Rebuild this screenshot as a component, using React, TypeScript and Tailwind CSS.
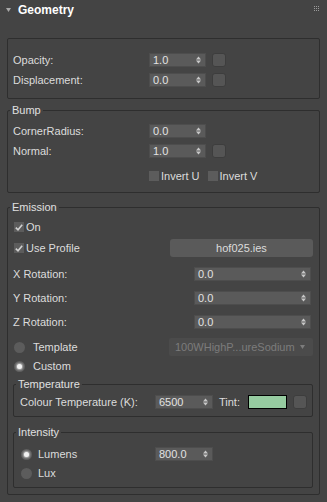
import React from "react";

const Arrows = () => (
  <svg width="5" height="8" viewBox="0 0 5 8" className="shrink-0">
    <path d="M0 3.5 L2.5 0.5 L5 3.5 Z" fill="#c8c8c8" />
    <path d="M0 4.5 L2.5 7.5 L5 4.5 Z" fill="#c8c8c8" />
  </svg>
);

function Spinner({ value, w }: { value: string; w: string }) {
  return (
    <div
      className={`${w} h-[14px] bg-[#5a5a5a] border border-[#4d4d4d] flex items-center justify-between pl-[3px] pr-[4px] text-[#e2e2e2] leading-none`}
    >
      <span>{value}</span>
      <Arrows />
    </div>
  );
}

const SmallBtn = () => (
  <div className="w-[14px] h-[14px] rounded-[3px] bg-[#555555] border border-[#3d3d3d]" />
);

function Check({ on }: { on?: boolean }) {
  return (
    <div className="w-[10px] h-[10px] bg-[#5c5c5c] flex items-center justify-center shrink-0">
      {on && (
        <svg width="8" height="7" viewBox="0 0 8 7">
          <path d="M0.8 3.6 L3 5.8 L7.2 0.8" stroke="#d0d0d0" strokeWidth="1.6" fill="none" />
        </svg>
      )}
    </div>
  );
}

function Radio({ on }: { on?: boolean }) {
  return (
    <div className="w-[11px] h-[11px] rounded-full bg-[#5c5c5c] flex items-center justify-center shrink-0">
      {on && <div className="w-[5px] h-[5px] rounded-full bg-[#f2f2f2] shadow-[0_0_2px_1px_#bdbdbd]" />}
    </div>
  );
}

function Group({ title, className, children }: { title: string; className: string; children: React.ReactNode }) {
  return (
    <fieldset className={`border border-[#2e2e2e] rounded-[2px] ${className}`}>
      <legend className="ml-[2px] px-[2px] leading-[12px] text-[#e0e0e0]">{title}</legend>
      {children}
    </fieldset>
  );
}

export default function App() {
  return (
    <div className="w-[327px] h-[502px] overflow-hidden bg-[#444444] text-[11px] text-[#dcdcdc] font-['Liberation_Sans',Arial,sans-serif]">
      {/* Header */}
      <div className="h-[38px] flex items-start pt-[4px] pl-[6px] pr-[8px]">
        <svg width="5" height="4" viewBox="0 0 5 4" className="mt-[4px]">
          <path d="M0 0 L5 0 L2.5 4 Z" fill="#a8a8a8" />
        </svg>
        <span className="ml-[7px] text-[12px] font-bold leading-[12px] text-white">Geometry</span>
        <svg width="5" height="5" viewBox="0 0 5 5" className="ml-auto mt-[2px]">
          {[0, 2, 4].map((y) =>
            [0, 2, 4].map((x) => <rect key={`${x}-${y}`} x={x} y={y} width="1" height="1" fill="#9a9a9a" />)
          )}
        </svg>
      </div>

      <div className="px-[7px]">
        {/* Opacity / Displacement */}
        <div className="border border-[#2e2e2e] rounded-[2px] pl-[5px] pt-[14px] pb-[11px] flex flex-col gap-[6px]">
          <div className="flex items-center h-[14px]">
            <span className="w-[136px]">Opacity:</span>
            <Spinner value="1.0" w="w-[57px]" />
            <div className="ml-[6px]"><SmallBtn /></div>
          </div>
          <div className="flex items-center h-[14px]">
            <span className="w-[136px]">Displacement:</span>
            <Spinner value="0.0" w="w-[57px]" />
            <div className="ml-[6px]"><SmallBtn /></div>
          </div>
        </div>

        {/* Bump */}
        <Group title="Bump" className="mt-[5px]">
          <div className="pl-[5px] pt-[8px] pb-[9px] flex flex-col">
            <div className="flex items-center h-[14px]">
              <span className="w-[136px]">CornerRadius:</span>
              <Spinner value="0.0" w="w-[57px]" />
            </div>
            <div className="flex items-center h-[14px] mt-[6px]">
              <span className="w-[136px]">Normal:</span>
              <Spinner value="1.0" w="w-[57px]" />
              <div className="ml-[6px]"><SmallBtn /></div>
            </div>
            <div className="flex items-center h-[14px] mt-[11px] pl-[136px]">
              <Check />
              <span className="ml-[2px]">Invert U</span>
              <div className="ml-[8px]"><Check /></div>
              <span className="ml-[2px]">Invert V</span>
            </div>
          </div>
        </Group>

        {/* Emission */}
        <Group title="Emission" className="mt-[8px]">
          <div className="pl-[5px] pr-[6px] pt-[7px] pb-[6px] flex flex-col">
            <div className="flex items-center h-[14px] pl-[1px]">
              <Check on />
              <span className="ml-[2px]">On</span>
            </div>
            <div className="flex items-center justify-between h-[18px] mt-[5px] pl-[1px]">
              <div className="flex items-center">
                <Check on />
                <span className="ml-[2px]">Use Profile</span>
              </div>
              <div className="w-[143px] h-[18px] rounded-[3px] bg-[#5a5a5a] flex items-center justify-center text-[#dcdcdc]">
                hof025.ies
              </div>
            </div>
            {["X Rotation:", "Y Rotation:", "Z Rotation:"].map((l) => (
              <div key={l} className="flex items-center justify-between h-[14px] mt-[10px] pr-[2px]">
                <span>{l}</span>
                <Spinner value="0.0" w="w-[117px]" />
              </div>
            ))}
            <div className="flex items-center justify-between h-[18px] mt-[9px]">
              <div className="flex items-center pl-[1px]">
                <Radio />
                <span className="ml-[8px]">Template</span>
              </div>
              <div className="w-[144px] h-[18px] rounded-[2px] bg-[#4b4b4b] flex items-center justify-between pl-[6px] pr-[8px] text-[#7c7c7c]">
                <span>100WHighP...ureSodium</span>
                <svg width="5" height="4" viewBox="0 0 5 4">
                  <path d="M0 0 L5 0 L2.5 4 Z" fill="#7c7c7c" />
                </svg>
              </div>
            </div>
            <div className="flex items-center h-[14px] mt-[3px] pl-[1px]">
              <Radio on />
              <span className="ml-[8px]">Custom</span>
            </div>

            <Group title="Temperature" className="mt-[5px]">
              <div className="pl-[6px] pt-[5px] pb-[7px]">
                <div className="flex items-center h-[14px]">
                  <span className="w-[135px] whitespace-nowrap">Colour Temperature (K):</span>
                  <Spinner value="6500" w="w-[58px]" />
                  <span className="ml-[6px]">Tint:</span>
                  <div className="ml-[8px] w-[39px] h-[14px] bg-[#96cba0] border border-black" />
                  <div className="ml-[6px]"><SmallBtn /></div>
                </div>
              </div>
            </Group>

            <Group title="Intensity" className="mt-[9px]">
              <div className="pl-[7px] pt-[9px] pb-[7px] flex flex-col">
                <div className="flex items-center h-[14px]">
                  <Radio on />
                  <span className="ml-[6px] w-[117px]">Lumens</span>
                  <Spinner value="800.0" w="w-[58px]" />
                </div>
                <div className="flex items-center h-[14px] mt-[5px]">
                  <Radio />
                  <span className="ml-[6px]">Lux</span>
                </div>
              </div>
            </Group>
          </div>
        </Group>
      </div>
    </div>
  );
}
